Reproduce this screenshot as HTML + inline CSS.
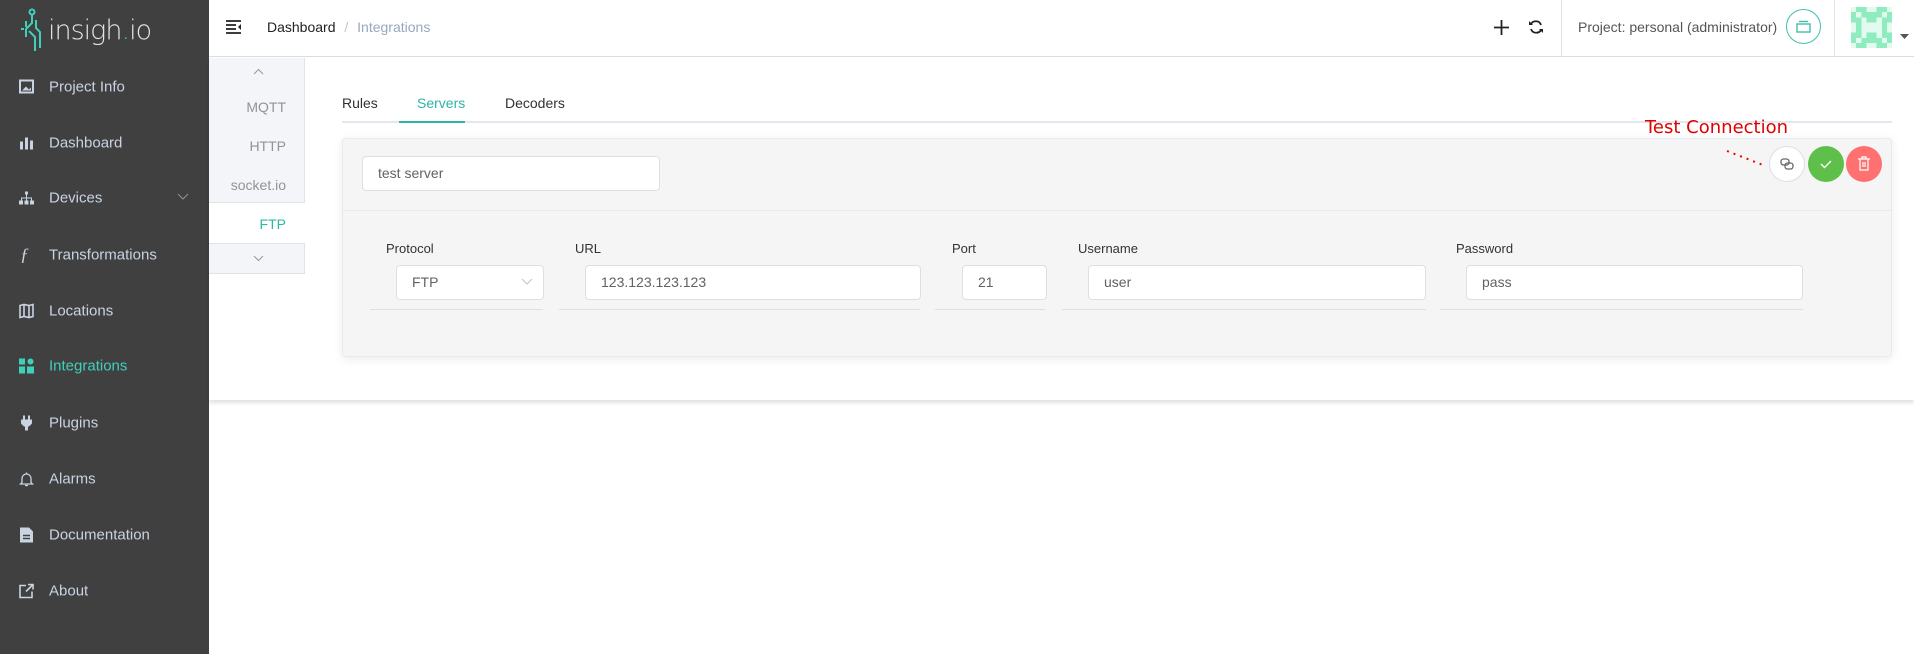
<!DOCTYPE html>
<html><head><meta charset="utf-8"><style>
*{box-sizing:border-box;margin:0;padding:0}
body{width:1914px;height:654px;overflow:hidden;background:#fff;font-family:"Liberation Sans",sans-serif;position:relative}
.abs{position:absolute}
#side{left:0;top:0;width:209px;height:654px;background:#404040}
.item{position:absolute;left:49px;font-size:15px;color:#c9d3e2;transform:translateY(-50%)}
.ic{position:absolute;left:19px;width:15px;height:15px;transform:translateY(-50%)}
#hdr{left:209px;top:0;width:1705px;height:57px;border-bottom:1px solid #d8dde6;background:#fff}
.lbl{position:absolute;top:241px;font-size:13px;color:#333}
.inp{position:absolute;top:265px;height:35px;background:#fff;border:1px solid #dcdfe6;border-radius:4px;font-size:14px;color:#606266;padding-left:15px;line-height:33px}
.ul{position:absolute;top:309px;height:1px;background:#dcdfe6}
.btn{position:absolute;top:146px;width:36px;height:36px;border-radius:50%}
</style></head><body>
<div id="side" class="abs">
  <svg class="abs" style="left:12px;top:6px" width="150" height="46" viewBox="0 0 150 46">
    <g stroke="#3fd0b8" stroke-width="2" fill="none">
      <circle cx="20" cy="6" r="2.5"/><path d="M20 9v8l-6 6v8M14 15v6M24 14v8l4 4v16M17 25l6 6v14M12 23h-3"/>
    </g>
    <text x="36" y="33" font-family="DejaVu Sans,sans-serif" font-size="27" font-weight="300" fill="#e4e4e4" letter-spacing="-1">insigh<tspan fill="#3fd0b8">.</tspan>io</text>
  </svg>
  <svg class="ic" style="top:87px" viewBox="0 0 15 15"><rect x="1" y="1" width="13" height="12" fill="none" stroke="#c9d3e2" stroke-width="2"/><path d="M3 11l4-4 3 3 2-2v3z" fill="#c9d3e2"/></svg><div class="item" style="top:87px">Project Info</div>
  <svg class="ic" style="top:143px" viewBox="0 0 15 15"><path d="M1 6h3v8H1zM6 2h3v12H6zM11 5h3v9h-3z" fill="#c9d3e2"/></svg><div class="item" style="top:143px">Dashboard</div>
  <svg class="ic" style="top:198px" viewBox="0 0 15 15"><path d="M6 1h3v3H6zM7 4h1v3H7zM2 7h11v1H2zM2 8h1v2H2zM7 8h1v2H7zM12 8h1v2h-1zM0 10h4v4H0zM5.5 10h4v4h-4zM11 10h4v4h-4z" fill="#c9d3e2"/></svg><div class="item" style="top:198px">Devices</div>
  <svg class="abs" style="left:177px;top:193px" width="12" height="8" viewBox="0 0 12 8"><path d="M1 1l5 5 5-5" stroke="#8a93a0" fill="none"/></svg>
  <div class="item" style="top:255px;left:20px;font-style:italic;font-family:'Liberation Serif',serif;font-size:18px">ƒ</div><div class="item" style="top:255px">Transformations</div>
  <svg class="ic" style="top:311px" viewBox="0 0 15 15"><path d="M1 2l4-1 5 1 4-1v12l-4 1-5-1-4 1zM5 1v12M10 2v12" fill="none" stroke="#c9d3e2" stroke-width="1.6"/></svg><div class="item" style="top:311px">Locations</div>
  <svg class="ic" style="top:366px" viewBox="0 0 15 15"><path d="M0 0h6v6H0zM0 8h6v7H0zM8 8h7v7H8z" fill="#3fd0b8"/><circle cx="11.5" cy="3" r="3" fill="#3fd0b8"/></svg><div class="item" style="top:366px;color:#3fd0b8">Integrations</div>
  <svg class="ic" style="top:423px" viewBox="0 0 15 15"><path d="M4 0h2v4H4zM9 0h2v4H9zM2 4h11v4l-3 3H5L2 8zM6 11h3v4H6z" fill="#c9d3e2"/></svg><div class="item" style="top:423px">Plugins</div>
  <svg class="ic" style="top:479px" viewBox="0 0 15 15"><path d="M7.5 1v1M3 11V7a4.5 4.5 0 019 0v4l1.5 1.5h-12zM6 14h3" fill="none" stroke="#c9d3e2" stroke-width="1.3"/></svg><div class="item" style="top:479px">Alarms</div>
  <svg class="ic" style="top:535px" viewBox="0 0 15 15"><path d="M1 0h9l4 4v11H1z" fill="#c9d3e2"/><path d="M4 8h7M4 11h7" stroke="#404040" stroke-width="1.5"/></svg><div class="item" style="top:535px">Documentation</div>
  <svg class="ic" style="top:591px" viewBox="0 0 15 15"><path d="M7 2H1v12h12V8M9 1h5v5M14 1L7 8" fill="none" stroke="#c9d3e2" stroke-width="1.6"/></svg><div class="item" style="top:591px">About</div>
</div>

<div id="hdr" class="abs">
  <svg class="abs" style="left:17px;top:20px" width="16" height="14" viewBox="0 0 16 14"><path d="M0 1h15M0 5h10M0 9h10M0 13h15" stroke="#222" stroke-width="1.8"/><path d="M15 4v6l-3-3z" fill="#222"/></svg>
  <div class="abs" style="left:58px;top:19px;font-size:14px;color:#222">Dashboard <span style="color:#c0c4cc;margin:0 5px">/</span> <span style="color:#97a8be">Integrations</span></div>
  <svg class="abs" style="left:1284px;top:19px" width="17" height="17" viewBox="0 0 17 17"><path d="M8.5 1v15M1 8.5h15" stroke="#222" stroke-width="1.8"/></svg>
  <svg class="abs" style="left:1319px;top:19px" width="16" height="16" viewBox="0 0 16 16"><path d="M13 6A5.5 5.5 0 003 5M3 10a5.5 5.5 0 0010 1" fill="none" stroke="#222" stroke-width="1.8"/><path d="M1 2v4h4zM15 14v-4h-4z" fill="#222"/></svg>
  <div class="abs" style="left:1352px;top:0;width:1px;height:57px;background:#dfe3ea"></div>
  <div class="abs" style="left:1369px;top:19px;font-size:14px;color:#555">Project: personal (administrator)</div>
  <div class="abs" style="left:1577px;top:9px;width:35px;height:35px;border:1.5px solid #3fbfae;border-radius:50%"></div>
  <svg class="abs" style="left:1587px;top:20px" width="15" height="13" viewBox="0 0 15 13"><rect x="1" y="4" width="13" height="8" fill="none" stroke="#3fbfae" stroke-width="1.4"/><path d="M3 1.5h9" stroke="#3fbfae" stroke-width="1.4"/></svg>
  <div class="abs" style="left:1625px;top:0;width:1px;height:57px;background:#dfe3ea"></div>
  <svg class="abs" style="left:1642px;top:7px" width="41" height="41" viewBox="0 0 8 8" shape-rendering="crispEdges"><rect width="8" height="8" fill="#8eecc0"/><path d="M0 0h1v1H0zM3 0h2v1H3zM7 0h1v1H7zM1 1h1v1H1zM6 1h1v1H6zM2 2h1v2H2zM5 2h1v2H5zM0 3h1v2H0zM7 3h1v2H7zM3 3h2v2H3zM2 4h1v2H2zM5 4h1v2H5zM1 6h1v1H1zM6 6h1v1H6zM0 7h1v1H0zM3 7h2v1H3zM7 7h1v1H7z" fill="#fff" opacity=".75"/></svg>
  <svg class="abs" style="left:1691px;top:34px" width="9" height="5"><path d="M0 0h9L4.5 5z" fill="#555"/></svg>
</div>

<div class="abs" style="left:209px;top:58px;width:1705px;height:342px;background:#fff;box-shadow:0 3px 4px rgba(0,0,0,.12)"></div>
<div class="abs" style="left:209px;top:58px;width:96px;height:145px;background:#f4f5f8;border-right:1px solid #dfe3ea;border-bottom:1px solid #dfe3ea"></div>
<svg class="abs" style="left:253px;top:68px" width="11" height="7"><path d="M1 6l4.5-4.5L10 6" stroke="#999" fill="none"/></svg>
<div class="abs" style="right:1628px;top:99px;font-size:14px;color:#909399">MQTT</div>
<div class="abs" style="right:1628px;top:138px;font-size:14px;color:#909399">HTTP</div>
<div class="abs" style="right:1628px;top:177px;font-size:14px;color:#909399">socket.io</div>
<div class="abs" style="right:1628px;top:216px;font-size:14px;color:#2bb7a4">FTP</div>
<div class="abs" style="left:209px;top:243px;width:96px;height:31px;background:#f4f5f8;border:1px solid #dfe3ea;border-left:none"></div>
<svg class="abs" style="left:253px;top:255px" width="11" height="7"><path d="M1 1l4.5 4.5L10 1" stroke="#999" fill="none"/></svg>

<div class="abs" style="left:342px;top:95px;font-size:14px;color:#303133">Rules</div>
<div class="abs" style="left:417px;top:95px;font-size:14px;color:#2bb7a4">Servers</div>
<div class="abs" style="left:505px;top:95px;font-size:14px;color:#303133">Decoders</div>
<div class="abs" style="left:342px;top:121px;width:1550px;height:2px;background:#e4e7ed"></div>
<div class="abs" style="left:399px;top:121px;width:66px;height:2px;background:#2bb7a4"></div>

<div class="abs" style="left:342px;top:138px;width:1550px;height:219px;background:#f5f5f5;border:1px solid #e6eaf1;border-radius:3px;box-shadow:0 2px 10px rgba(0,0,0,.08)"></div>
<div class="abs" style="left:343px;top:210px;width:1548px;height:1px;background:#e4e9f2"></div>
<div class="inp" style="left:362px;top:156px;width:298px;height:35px">test server</div>
<div class="abs" style="left:1645px;top:117px;font-family:'DejaVu Sans',sans-serif;font-size:18px;color:#e00000">Test Connection</div>
<svg class="abs" style="left:1725px;top:148px" width="40" height="20"><path d="M2 3L38 17" stroke="#e00" stroke-width="2" stroke-dasharray="2 5"/></svg>
<div class="btn" style="left:1769px;background:#fff;border:1px solid #dcdfe6"></div>
<svg class="abs" style="left:1780px;top:157px" width="14" height="14" viewBox="0 0 14 14"><rect x="1" y="2" width="8" height="6" rx="2.5" fill="none" stroke="#666" stroke-width="1.3"/><rect x="5" y="6" width="8" height="6" rx="2.5" fill="none" stroke="#666" stroke-width="1.3"/></svg>
<div class="btn" style="left:1808px;background:#5ec04a"></div>
<svg class="abs" style="left:1819px;top:158px" width="14" height="12"><path d="M2 6l3.5 3.5L12 3" stroke="#fff" stroke-width="1.4" fill="none"/></svg>
<div class="btn" style="left:1846px;background:#ff7070"></div>
<svg class="abs" style="left:1857px;top:156px" width="14" height="15" viewBox="0 0 14 15"><path d="M1 3h12M5 3V1h4v2M3 3v11h8V3M6 6v5M8 6v5" stroke="#fff" stroke-width="1.2" fill="none"/></svg>

<div class="lbl" style="left:386px">Protocol</div>
<div class="lbl" style="left:575px">URL</div>
<div class="lbl" style="left:952px">Port</div>
<div class="lbl" style="left:1078px">Username</div>
<div class="lbl" style="left:1456px">Password</div>
<div class="inp" style="left:396px;width:148px">FTP</div>
<svg class="abs" style="left:521px;top:278px" width="12" height="7"><path d="M1 1l5 5 5-5" stroke="#c0c4cc" fill="none"/></svg>
<div class="inp" style="left:585px;width:336px">123.123.123.123</div>
<div class="inp" style="left:962px;width:85px">21</div>
<div class="inp" style="left:1088px;width:338px">user</div>
<div class="inp" style="left:1466px;width:337px">pass</div>
<div class="ul" style="left:370px;width:173px"></div>
<div class="ul" style="left:559px;width:361px"></div>
<div class="ul" style="left:935px;width:110px"></div>
<div class="ul" style="left:1062px;width:364px"></div>
<div class="ul" style="left:1440px;width:363px"></div>
</body></html>
